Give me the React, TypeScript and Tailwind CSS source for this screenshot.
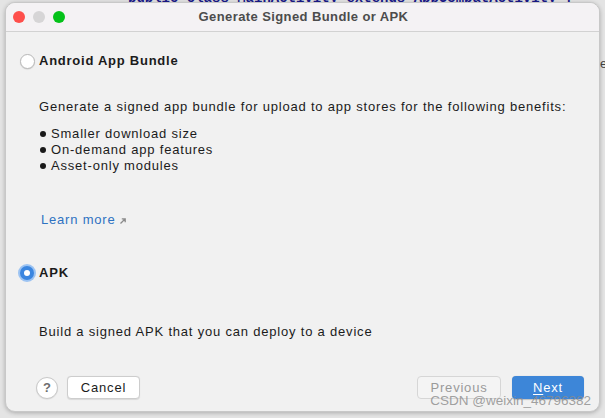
import React from "react";

const font = { fontFamily: '"Liberation Sans", Arial, sans-serif' };

const Radio = ({ checked }: { checked?: boolean }) =>
  checked ? (
    <span className="flex h-[18px] w-[18px] items-center justify-center rounded-full bg-[#9cc3f2]">
      <span className="flex h-[14px] w-[14px] items-center justify-center rounded-full bg-[#3b86e0]">
        <span className="h-[6px] w-[6px] rounded-full bg-white" />
      </span>
    </span>
  ) : (
    <span className="flex h-[18px] w-[18px] items-center justify-center">
      <span className="h-[15px] w-[15px] rounded-full border border-[#b9b9b9] bg-white shadow-[0_0.5px_1px_rgba(0,0,0,0.15)]" />
    </span>
  );

const Bullet = ({ children }: { children: React.ReactNode }) => (
  <li className="flex h-4 items-center">
    <span className="mr-[5px] ml-[1px] h-[6px] w-[6px] rounded-full bg-[#1a1a1a]" />
    {children}
  </li>
);

export default function App() {
  return (
    <div
      className="relative h-[418px] w-[605px] overflow-hidden bg-[#e4e4e4] text-[13px] tracking-[0.8px] text-[#1b1b1b]"
      style={font}
    >
      <div className="absolute left-[128px] top-[-12px] whitespace-nowrap font-mono text-[14px] font-bold tracking-normal text-[#1a1a8a]">
        public class MainActivity extends AppCompatActivity {"{"}
      </div>
      <div className="absolute right-0 top-[54px] w-[5px] text-[13px] tracking-normal text-[#444]">e</div>

      <div className="relative ml-[5px] mt-[2px] flex h-[410px] w-[595px] flex-col overflow-hidden rounded-[10px] border border-[#c8c8c8] bg-[#f1f1f1] shadow-[0_1px_4px_rgba(0,0,0,0.25)]">
        <div className="relative flex h-[29px] shrink-0 items-center border-b border-[#d2d2d2] bg-[#f4f2f4] pl-[7px]">
          <div className="flex gap-[8px]">
            <span className="h-[12px] w-[12px] rounded-full bg-[#fe4f4b]" />
            <span className="h-[12px] w-[12px] rounded-full bg-[#d6d5d6]" />
            <span className="h-[12px] w-[12px] rounded-full bg-[#04c219]" />
          </div>
          <div className="absolute inset-0 flex items-center justify-center pl-[2px] font-bold tracking-[0.4px] text-[#4c4c4c]">
            Generate Signed Bundle or APK
          </div>
        </div>

        <div className="flex flex-1 flex-col pl-[12px]">
          <div className="mt-[20px] flex h-[18px] items-center gap-[3px]">
            <Radio />
            <span className="font-bold tracking-[0.75px]">Android App Bundle</span>
          </div>
          <div className="ml-[21px] mt-[28px]">
            <p className="h-[18px] leading-[18px]">
              Generate a signed app bundle for upload to app stores for the following benefits:
            </p>
            <ul className="mt-[10px] leading-4">
              <Bullet>Smaller download size</Bullet>
              <Bullet>On-demand app features</Bullet>
              <Bullet>Asset-only modules</Bullet>
            </ul>
            <a className="mt-[38px] flex h-4 items-center gap-[4px] pl-[2px] text-[#2e72c2]">
              Learn more
              <svg width="8" height="8" viewBox="0 0 8 8" className="mt-[1px]">
                <path d="M1.5 6.5 L6 2 M2.8 1.8 H6.2 V5.2" stroke="#8a8a8a" strokeWidth="1.3" fill="none" />
              </svg>
            </a>
          </div>
          <div className="mt-[36px] flex h-[18px] items-center gap-[3px]">
            <Radio checked />
            <span className="font-bold">APK</span>
          </div>
          <p className="ml-[21px] mt-[41px] h-[18px] leading-[18px]">
            Build a signed APK that you can deploy to a device
          </p>

          <div className="mt-auto mb-[12px] flex items-center pr-[15px]">
            <button className="ml-[18px] flex h-[22px] w-[22px] items-center justify-center rounded-full border border-[#c9c9c9] bg-white text-[13px] font-bold tracking-normal text-[#6e6e6e] shadow-[0_0.5px_1px_rgba(0,0,0,0.1)]">
              ?
            </button>
            <button className="ml-[9px] h-[23px] w-[73px] rounded-[4px] border border-[#cdcdcd] bg-white text-[#1b1b1b] shadow-[0_0.5px_1px_rgba(0,0,0,0.1)]">
              Cancel
            </button>
            <button className="ml-auto h-[23px] w-[84px] rounded-[4px] border border-[#d6d6d6] bg-[#f4f4f4] text-[#9a9a9a]">
              Previous
            </button>
            <button className="ml-[11px] h-[23px] w-[72px] rounded-[4px] bg-[#3d86d8] text-white shadow-[0_0.5px_1px_rgba(0,0,0,0.2)]">
              <span className="underline underline-offset-2">N</span>ext
            </button>
          </div>
        </div>

        <div className="absolute bottom-[0px] right-[8px] text-[13.5px] tracking-normal text-[#8a8a8a]/80">
          CSDN @weixin_46796382
        </div>
      </div>
    </div>
  );
}
